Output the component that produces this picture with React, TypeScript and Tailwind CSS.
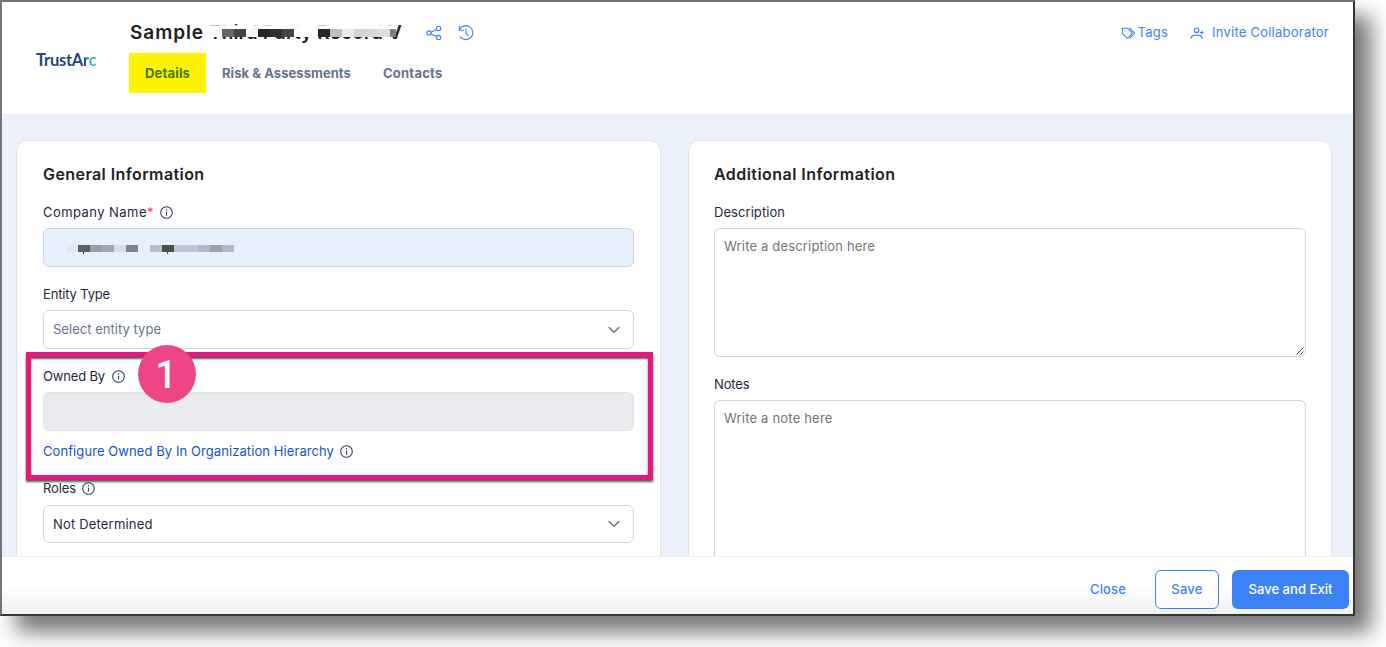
import type { ReactNode } from "react";

function InfoIcon() {
  return (
    <svg className="-ml-px size-[13px] shrink-0" viewBox="0 0 13 13" fill="none" stroke="#334155">
      <circle cx="6.5" cy="6.5" r="5.8" strokeWidth="1.1" />
      <path d="M6.5 5.6v4" strokeWidth="1.1" />
      <path d="M6.5 3.2v1.3" strokeWidth="1.2" />
    </svg>
  );
}

function ShareIcon() {
  return (
    <svg className="size-4" viewBox="0 0 16 16" fill="none" stroke="#3b82f6" strokeWidth="1.1">
      <circle cx="3" cy="8" r="2.1" />
      <circle cx="12.6" cy="3.4" r="2.2" />
      <circle cx="12.6" cy="12.6" r="2.2" />
      <path d="M5 7.2l5.6-2.8M5 8.9l5.6 2.7" />
    </svg>
  );
}

function HistoryIcon() {
  return (
    <svg className="size-4" viewBox="0 0 16 16" fill="none" stroke="#3b82f6" strokeWidth="1.1" strokeLinecap="round" strokeLinejoin="round">
      <path d="M1.5 4.6A7 7 0 1 1 2.2 11.8" />
      <path d="M1.3 1.3v3.9h4.1" />
      <path d="M8 4.4v4l2 2" />
    </svg>
  );
}

function TagsIcon() {
  return (
    <svg className="h-3 w-[13px]" viewBox="0.5 0 13 12" fill="none" stroke="#3b82f6" strokeWidth="1.1" strokeLinejoin="round" strokeLinecap="round">
      <path d="M1 1.200h4.900l4.300 4.200c.5.5.5 1 0 1.500L6.700 10.800c-.5.5-1 .5-1.500 0L1 6.300z" />
      <path d="M8.300 1.200l4.200 4.200c.5.5.5 1 0 1.500L8.600 10.900" />
      <circle cx="3.600" cy="3.700" r=".6" fill="#3b82f6" stroke="none" />
    </svg>
  );
}

function UserPlusIcon() {
  return (
    <svg className="h-3 w-[14px]" viewBox="0 0 14 12" fill="none" stroke="#3b82f6" strokeWidth="1.1" strokeLinecap="round">
      <circle cx="6.600" cy="3.300" r="2.300" />
      <path d="M1 11.200c.3-2.100 1.600-3 3.600-3h4c2 0 3.300.9 3.600 3" />
      <path d="M10.300 5.500h3M11.800 4v3" />
    </svg>
  );
}

function ChevronIcon() {
  return (
    <svg className="h-2 w-3" viewBox="0 0 12 8" fill="none" stroke="#64748b" strokeWidth="1.4" strokeLinecap="round" strokeLinejoin="round">
      <path d="M1.100 1.400L6 6.300l4.900-4.900" />
    </svg>
  );
}

function Logo() {
  return (
    <div className="flex h-5 w-[61px] items-center whitespace-nowrap pt-px font-['Lato',sans-serif] text-[16.500px] font-bold leading-5 tracking-[-0.250px] text-[#24497d]">
      TrustA<span className="bg-linear-to-r from-[#24497d] from-10% to-[#3bb5cf] to-60% bg-clip-text text-transparent">rc</span>
    </div>
  );
}

function Mosaic({ cells, className }: { cells: string[]; className: string }) {
  return (
    <span className={className}>
      {cells.map((c, i) => (
        <span key={i} className="h-full w-3 shrink-0" style={{ backgroundColor: c }} />
      ))}
    </span>
  );
}

const titleCells = ["#fafafa", "#666666", "#444444", "#f5f5f5", "#262626", "#303030", "#454545", "#ffffff", "#ffffff", "#282828", "#bebebe", "#ececec", "#d3d3d3", "#d8d8d8", "#dedede", "#808080"];
const nameCells = ["#e5effd", "#dfe8f4", "#5c5f64", "#9a9ea8", "#a4a8b2", "#d5dfea", "#808388", "#e7f1fe", "#b8bfca", "#4b4d51", "#bfc8d4", "#c0c7d3", "#b4bac6", "#9fa3ae", "#b2bbc6"];

function Label({ children }: { children: ReactNode }) {
  return <div className="flex h-4 items-center gap-1.5 whitespace-nowrap leading-4 text-[#1e293b]">{children}</div>;
}

function Select({ children, className }: { children: ReactNode; className: string }) {
  return (
    <div className={`flex items-center justify-between rounded-md border border-[#cbd5e1] bg-white pr-[13px] pl-[9px] ${className}`}>
      {children}
      <ChevronIcon />
    </div>
  );
}

export default function App() {
  return (
    <div className="h-[647px] w-[1386px] overflow-hidden bg-white font-['Inter',sans-serif] text-[13px]">
      <div className="relative flex h-[616px] w-[1355px] flex-col border-2 border-t-[#757575] border-r-[#353535] border-b-[#353535] border-l-[#757575] bg-white shadow-[16px_16px_20px_rgba(0,0,0,0.54)]">
        <header className="flex h-28 shrink-0 pr-6 pl-[34px]">
          <div className="mt-[47px]">
            <Logo />
          </div>
          <div className="ml-8 flex flex-col">
            <div className="mt-[18px] flex h-[26px] items-center">
              <h1 className="flex whitespace-nowrap text-[19px] font-semibold leading-[26px] text-[#212121]">
                <span className="w-[80px] pl-px tracking-[0.930px]">Sample</span>
                <span className="relative w-[193px] tracking-[0.120px]">
                  Third Party Record V
                  <span className="absolute top-[5px] left-0 h-px w-[187px] bg-white/75" />
                  <span className="absolute top-[6px] left-0 h-[11px] w-[187px] bg-white" />
                  <Mosaic cells={titleCells} className="absolute top-[9px] left-[1px] flex h-2 w-[186px] overflow-hidden" />
                </span>
              </h1>
              <button className="ml-6">
                <ShareIcon />
              </button>
              <button className="ml-4">
                <HistoryIcon />
              </button>
            </div>
            <nav className="mt-[7px] flex h-10 items-center whitespace-nowrap font-bold text-[#64748b]">
              <div className="flex h-10 w-[77px] items-center bg-[#fff200] pt-0.5 pl-4 tracking-[0.170px] text-[#3a7d0a]">Details</div>
              <div className="ml-4 w-[161px] pt-0.5 tracking-[0.060px]">Risk &amp; Assessments</div>
              <div className="pt-0.5 tracking-[0.230px]">Contacts</div>
            </nav>
          </div>
          <div className="mt-[22px] ml-auto flex h-[18px] items-center whitespace-nowrap text-[#3b82f6]">
            <TagsIcon />
            <span className="ml-[3px] tracking-[0.200px]">Tags</span>
            <span className="ml-[22px] flex items-center gap-2">
              <UserPlusIcon />
              <span className="tracking-[0.240px]">Invite Collaborator</span>
            </span>
          </div>
        </header>

        <main className="flex h-[442px] shrink-0 gap-[27px] overflow-hidden bg-[#eaf1fa] pt-[26px] pl-[14px]">
          <section className="h-[500px] w-[645px] shrink-0 rounded-xl border border-[#dce6f0] bg-white px-[26px] pt-[21px]">
            <h2 className="h-6 whitespace-nowrap text-[16px] font-semibold leading-6 tracking-[0.420px] text-[#212121]">General Information</h2>
            <div className="mt-[18px]">
              <Label>
                <span className="mr-px tracking-[0.450px]">
                  Company Name<span className="text-[#f43f5e]">*</span>
                </span>
                <InfoIcon />
              </Label>
            </div>
            <div className="relative mt-2 h-[39px] rounded-md border border-[#cbd5e1] bg-[#e7f1fe]">
              <Mosaic cells={nameCells} className="absolute top-4 left-[10px] flex h-[7px]" />
              <span className="absolute top-[23px] left-[39px] h-0.5 w-px bg-[#222222]" />
              <span className="absolute top-[23px] left-[123px] h-0.5 w-px rotate-12 bg-[#222222]" />
            </div>
            <div className="mt-[19px]">
              <Label>
                <span className="tracking-[-0.160px]">Entity Type</span>
              </Label>
            </div>
            <Select className="mt-2 h-[39px]">
              <span className="tracking-[0.030px] text-[#64748b]">Select entity type</span>
            </Select>
            <div className="mt-[19px]">
              <Label>
                <span className="mr-0.5 tracking-[-0.160px]">Owned By</span>
                <InfoIcon />
              </Label>
            </div>
            <div className="mt-2 h-[39px] rounded-md border border-[#dfe5ec] bg-[#e9ebee]" />
            <div className="mt-3 flex h-4 items-center gap-1.5 whitespace-nowrap leading-4 text-[#1453d0]">
              <span className="mr-px tracking-[0.080px]">Configure Owned By In Organization Hierarchy</span>
              <InfoIcon />
            </div>
            <div className="mt-[21px]">
              <Label>
                <span className="mr-px tracking-[-0.110px]">Roles</span>
                <InfoIcon />
              </Label>
            </div>
            <Select className="mt-[9px] h-[38px]">
              <span className="pt-px tracking-[0.180px] text-[#1e293b]">Not Determined</span>
            </Select>
          </section>

          <section className="h-[500px] w-[644px] shrink-0 rounded-xl border border-[#dce6f0] bg-white px-[25px] pt-[21px]">
            <h2 className="h-6 whitespace-nowrap text-[16px] font-semibold leading-6 tracking-[0.450px] text-[#212121]">Additional Information</h2>
            <div className="mt-[18px]">
              <Label>
                <span className="tracking-[0.060px]">Description</span>
              </Label>
            </div>
            <div className="mt-2 flex h-[129px] flex-col justify-between rounded-md border border-[#cbd5e1] pt-[9px] pl-[9px] leading-4 text-[#757575]">
              <span className="tracking-[0.170px]">Write a description here</span>
              <svg className="mr-px mb-px size-2 self-end" viewBox="0 0 8 8" stroke="#444444" strokeWidth="1">
                <path d="M.5 7.500l7-7M4.500 7.500l3-3" />
              </svg>
            </div>
            <div className="mt-[19px]">
              <Label>
                <span className="tracking-[-0.130px]">Notes</span>
              </Label>
            </div>
            <div className="mt-2 h-[200px] rounded-md border border-[#cbd5e1] pt-[9px] pl-[9px] leading-4 tracking-[0.190px] text-[#757575]">Write a note here</div>
          </section>
        </main>

        <footer className="flex h-[58px] shrink-0 items-start justify-end border-t border-[#eeeff1] bg-linear-to-b from-white from-50% to-[#f0f0f0] pt-[13px] pr-1 font-medium text-[#3b82f6]">
          <button className="mr-[29px] h-[39px] tracking-[0.140px]">Close</button>
          <button className="mr-[13px] h-[39px] w-16 rounded-md border border-[#3b82f6] bg-white/60 tracking-[0.270px]">Save</button>
          <button className="h-[39px] w-[117px] rounded-md bg-[#3b82f6] tracking-[0.050px] text-white">Save and Exit</button>
        </footer>

        <div className="absolute top-[350px] left-[24px] h-[128px] w-[627px] border-[5px] border-[#e51a78] shadow-[0_2px_2px_rgba(0,0,0,0.65),inset_0_2px_2px_rgba(0,0,0,0.65)]" />
        <div className="absolute top-[343px] left-[136px] flex size-[58px] items-center justify-center rounded-full bg-[#ee4587] pt-0.5 pr-0.5 font-['Roboto',sans-serif] text-[38px] font-medium leading-none text-white">
          1
        </div>
      </div>
    </div>
  );
}
